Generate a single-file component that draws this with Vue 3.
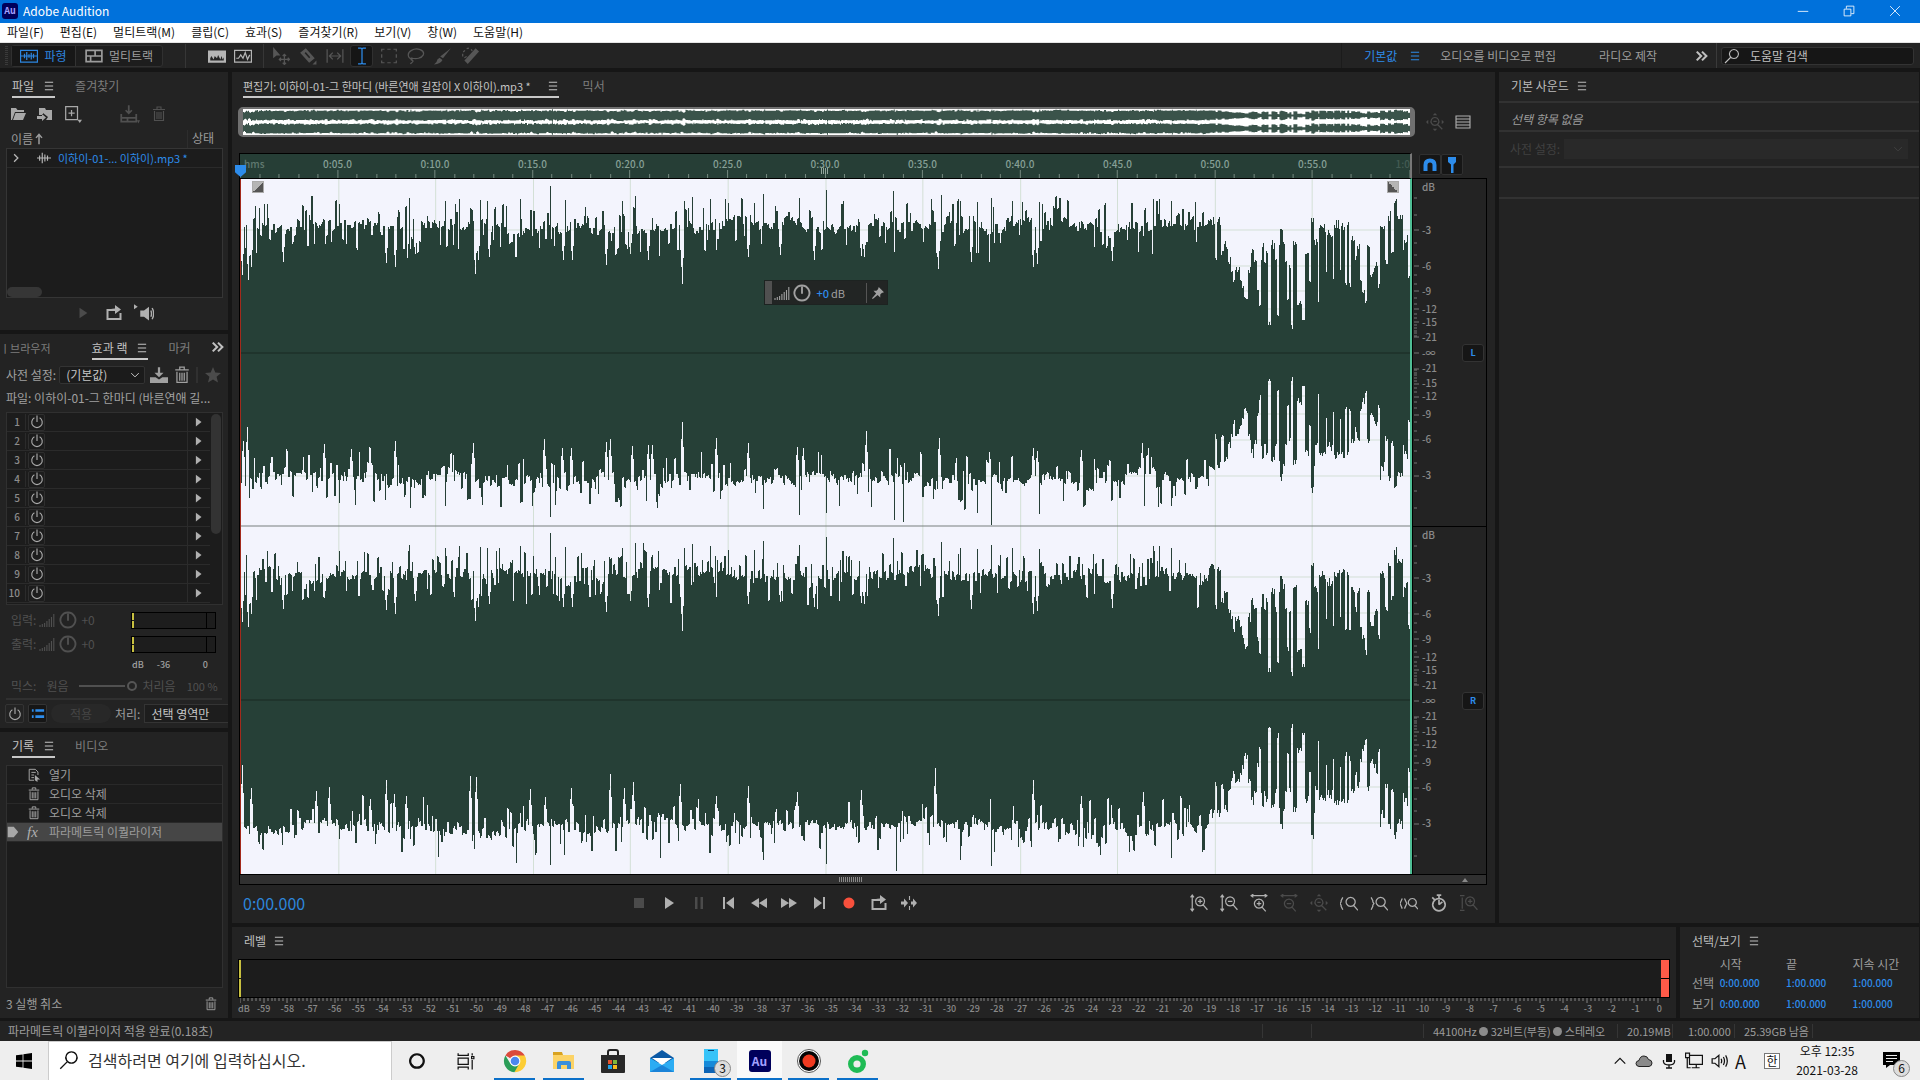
<template>
  <div class="app">
    <header class="titlebar">
      <span class="au-logo">Au</span>
      <h1 class="app-title">Adobe Audition</h1>
      <div class="window-controls">
        <button aria-label="Minimize"><Icon name="minimize" :size="12" /></button>
        <button aria-label="Restore"><Icon name="restore" :size="12" /></button>
        <button aria-label="Close"><Icon name="close" :size="12" /></button>
      </div>
    </header>

    <nav class="menubar">
      <button v-for="item in menus" :key="item">{{ item }}</button>
    </nav>

    <!-- Tools and workspaces -->
    <div class="toolbar">
      <span class="grip"></span>
      <div class="view-switch">
        <button class="view active"><Icon name="waveBox" :size="18" />파형</button>
        <button class="view"><Icon name="tracks" :size="18" />멀티트랙</button>
      </div>
      <span class="tool-divider first"></span>
      <div class="display-tools">
        <button aria-label="Spectral frequency"><Icon name="spectral" :size="18" /></button>
        <button aria-label="Spectral pitch"><Icon name="pitch" :size="18" /></button>
      </div>
      <span class="tool-divider"></span>
      <div class="tools">
        <button v-for="t in tools" :key="t" :class="{ active: t === 'ibeam' }" :aria-label="t">
          <Icon :name="t" :size="18" />
        </button>
      </div>
      <div class="workspaces">
        <button class="current">기본값 <Icon name="menu" :size="12" /></button>
        <button class="ws-video">오디오를 비디오로 편집</button>
        <button class="ws-radio">라디오 제작</button>
        <button class="ws-more" aria-label="More"><Icon name="more" :size="14" /></button>
      </div>
      <label class="help-search">
        <Icon name="search" :size="16" />
        <input type="text" value="도움말 검색" aria-label="도움말 검색" />
      </label>
    </div>

    <main class="workspace">
      <aside class="left-column">
        <section class="panel files-panel">
          <div class="tabs">
            <button class="tab active">파일 <Icon name="menu" :size="12" /></button>
            <button class="tab">즐겨찾기</button>
          </div>
          <div class="file-tools">
            <button aria-label="Open"><Icon name="folder" :size="16" /></button>
            <button aria-label="Import"><Icon name="importFile" :size="16" /></button>
            <button aria-label="New"><Icon name="newFile" :size="18" /></button>
            <button class="dim insert" aria-label="Insert"><Icon name="insert" :size="20" /></button>
            <button class="dim" aria-label="Delete"><Icon name="trash" :size="16" /></button>
          </div>
          <div class="file-head">
            <span class="name">이름<Icon name="arrowUp" :size="12" /></span>
            <span class="state">상태</span>
          </div>
          <div class="file-list">
            <div class="file-row">
              <Icon name="chevronRight" :size="10" />
              <Icon name="wave" :size="14" />
              <span>이하이-01-... 이하이).mp3 *</span>
            </div>
            <div class="h-thumb"></div>
          </div>
          <div class="preview-tools">
            <button class="dim" aria-label="Play"><Icon name="play" :size="14" /></button>
            <button aria-label="Loop"><Icon name="loop" :size="16" /></button>
            <button class="auto" aria-label="Auto play"><Icon name="speaker" :size="20" /></button>
          </div>
        </section>

        <section class="panel effects-panel">
          <div class="tabs effects-tabs">
            <button class="tab cut">ㅣ브라우저</button>
            <button class="tab active">효과 랙 <Icon name="menu" :size="12" /></button>
            <button class="tab marker">마커</button>
            <button class="tab-more" aria-label="More"><Icon name="more" :size="14" /></button>
          </div>
          <div class="preset-row">
            <label for="rack-preset">사전 설정:</label>
            <span class="select-box">
              <select id="rack-preset"><option>(기본값)</option></select>
              <Icon name="chevronDown" :size="10" />
            </span>
            <button aria-label="Save preset"><Icon name="save" :size="18" /></button>
            <button aria-label="Delete preset"><Icon name="trash" :size="18" /></button>
            <button class="dim star" aria-label="Favorite"><Icon name="star" :size="16" /></button>
          </div>
          <p class="rack-file">파일: 이하이-01-그 한마디 (바른연애 길...</p>
          <div class="rack">
            <ol class="slots">
              <li v-for="n in 10" :key="n">
                <span class="slot-no">{{ n }}</span>
                <button class="power" aria-label="Power"><Icon name="power" :size="14" /></button>
                <button class="slot-menu" aria-label="Slot"><Icon name="triangle" :size="10" /></button>
              </li>
            </ol>
            <div class="v-thumb"></div>
          </div>
          <div class="gain" v-for="g in ['입력:', '출력:']" :key="g">
            <span>{{ g }}</span>
            <Icon name="bars" :size="16" />
            <Icon name="knob" :size="20" />
            <span>+0</span>
            <span class="mini-meter"><i></i></span>
          </div>
          <div class="mini-scale"><span>dB</span><span class="mid">-36</span><span class="max">0</span></div>
          <div class="mix-row">
            <label for="mix">믹스:</label>
            <span class="dry">원음</span>
            <input id="mix" type="range" min="0" max="100" value="100" disabled />
            <span>처리음</span>
            <span class="mix-value">100 %</span>
          </div>
          <div class="apply-row">
            <button class="boxed" aria-label="Power"><Icon name="power" :size="14" /></button>
            <button class="boxed blue" aria-label="List"><Icon name="list" :size="14" /></button>
            <button class="apply" disabled>적용</button>
            <label for="process">처리:</label>
            <select id="process"><option>선택 영역만</option></select>
          </div>
        </section>

        <section class="panel history-panel">
          <div class="tabs">
            <button class="tab active">기록 <Icon name="menu" :size="12" /></button>
            <button class="tab">비디오</button>
          </div>
          <ul class="history">
            <li v-for="(h, i) in history" :key="i" :class="{ selected: i === 3 }">
              <span class="pointer"><Icon v-if="i === 3" name="pointer" :size="12" /></span>
              <em v-if="h.icon === 'fx'">fx</em>
              <Icon v-else :name="h.icon" :size="14" />
              <span>{{ h.text }}</span>
            </li>
          </ul>
          <div class="history-foot">
            <span>3 실행 취소</span>
            <button aria-label="Delete"><Icon name="trash" :size="14" /></button>
          </div>
        </section>
      </aside>

      <div class="center-column">
        <div class="upper">
          <section class="panel editor">
            <div class="tabs editor-tabs">
              <button class="tab active">편집기: 이하이-01-그 한마디 (바른연애 길잡이 X 이하이).mp3 * <Icon name="menu" :size="12" /></button>
              <button class="tab">믹서</button>
            </div>

            <div class="overview-row">
              <div class="overview">
                <svg :viewBox="`0 0 ${W} ${H}`" preserveAspectRatio="none">
                  <path v-for="(d, i) in waves" :key="i" :d="d" />
                </svg>
              </div>
              <button class="dim" aria-label="Zoom out full"><Icon name="zoomAll" :size="18" /></button>
              <button aria-label="Panel"><Icon name="lines" :size="16" /></button>
            </div>

            <div class="timeline">
              <div class="ruler">
                <div class="ruler-labels">
                  <span class="hms">hms</span>
                  <span v-for="t in times" :key="t">{{ t }}</span>
                  <span class="last">1:0</span>
                </div>
                <svg class="ruler-ticks" viewBox="0 0 1171 8" preserveAspectRatio="none">
                  <path :d="rulerTicks" />
                </svg>
                <span class="playhead"></span>
                <span class="mid-grip"></span>
              </div>
              <div class="snap-buttons">
                <button aria-label="Snap"><Icon name="magnet" :size="16" /></button>
                <button aria-label="Marker"><Icon name="marker" :size="16" /></button>
              </div>

              <div class="waves">
                <svg :viewBox="`0 0 ${W} ${H}`" preserveAspectRatio="none">
                  <path class="grid" :d="gridLines" />
                  <path v-for="(d, i) in waves" :key="i" class="wave" :d="d" />
                  <path class="zero" :d="`M0 174H${W}M0 521H${W}`" />
                  <path class="split" :d="`M0 347H${W}`" />
                </svg>
                <span class="fade-handle in"></span>
                <span class="fade-handle out"></span>
                <div class="hud">
                  <span class="hud-grip"></span>
                  <Icon name="bars" :size="16" />
                  <Icon name="knob" :size="20" />
                  <b>+0</b><span>dB</span>
                  <button aria-label="Pin"><Icon name="pin" :size="12" /></button>
                </div>
              </div>

              <div class="db-scale">
                <div v-for="c in ['L', 'R']" :key="c" class="db-channel">
                  <svg viewBox="0 0 6 347" preserveAspectRatio="none"><path :d="dbTicks" /></svg>
                  <span class="db-unit">dB</span>
                  <span v-for="(m, i) in dbMarks" :key="i" class="db-label" :style="{ top: m.pos + '%' }">{{ m.text }}</span>
                  <button class="channel-button">{{ c }}</button>
                </div>
              </div>
              <div class="h-scroll"><i></i><b></b></div>
            </div>

            <div class="transport">
              <output class="clock">0:00.000</output>
              <div class="transport-buttons">
                <button v-for="t in transport" :key="t" :class="{ dim: t === 'stop' || t === 'pause', rec: t === 'record' }" :aria-label="t">
                  <Icon :name="t" :size="16" />
                </button>
              </div>
              <div class="zoom-buttons">
                <button v-for="(z, i) in zooms" :key="i" :class="{ dim: z.off }" :aria-label="z.name">
                  <Icon :name="z.name" :size="18" />
                </button>
              </div>
            </div>
          </section>

          <section class="panel sound">
            <h2>기본 사운드 <Icon name="menu" :size="12" /></h2>
            <p class="nothing">선택 항목 없음</p>
            <div class="sound-preset">
              <label for="sound-preset">사전 설정:</label>
              <span class="sound-select">
                <select id="sound-preset" disabled><option></option></select>
                <Icon name="chevronDown" :size="10" />
              </span>
            </div>
            <div class="sound-empty"></div>
          </section>
        </div>

        <div class="lower">
          <section class="panel levels">
            <h2>레벨 <Icon name="menu" :size="12" /></h2>
            <div class="meter">
              <span class="floor"></span>
              <span class="clip"><i></i><i></i></span>
            </div>
            <svg class="level-ticks" viewBox="0 0 1419 5" preserveAspectRatio="none"><path :d="levelTicks" /></svg>
            <div class="level-labels">
              <span class="unit">dB</span>
              <span v-for="n in 59" :key="n">{{ n - 60 }}</span>
              <span class="zero-db">0</span>
            </div>
          </section>

          <section class="panel selection">
            <h2>선택/보기 <Icon name="menu" :size="12" /></h2>
            <table>
              <thead>
                <tr><td></td><th>시작</th><th>끝</th><th>지속 시간</th></tr>
              </thead>
              <tbody>
                <tr v-for="r in ['선택', '보기']" :key="r">
                  <th>{{ r }}</th><td>0:00.000</td><td>1:00.000</td><td>1:00.000</td>
                </tr>
              </tbody>
            </table>
          </section>
        </div>
      </div>
    </main>

    <footer class="statusbar">
      <span class="message">파라메트릭 이퀄라이저 적용 완료(0.18초)</span>
      <span class="cell c1"></span>
      <span class="cell c2"></span>
      <span class="cell format">44100Hz <i></i> 32비트(부동) <i></i> 스테레오</span>
      <span class="cell size">20.19MB</span>
      <span class="cell length">1:00.000</span>
      <span class="cell free">25.39GB 남음</span>
      <span class="cell end"></span>
    </footer>

    <div class="taskbar">
      <button class="start" aria-label="Start">
        <svg width="16" height="16" viewBox="0 0 16 16"><path d="M0 2.3 6.6 1.4V7.6H0zM7.4 1.2 16 0V7.6H7.4zM0 8.4H6.6V14.6L0 13.7zM7.4 8.4H16V16L7.4 14.8z" /></svg>
      </button>
      <label class="task-search">
        <Icon name="search" :size="20" />
        <input type="text" placeholder="검색하려면 여기에 입력하십시오." aria-label="검색" />
      </label>
      <button class="task" aria-label="Cortana"><Icon name="ring" :size="18" /></button>
      <button class="task" aria-label="Task view"><Icon name="taskview" :size="18" /></button>
      <button class="task open" aria-label="Chrome">
        <svg width="24" height="24" viewBox="0 0 24 24">
          <path fill="#db4a3c" d="M12 12 2.4 6.4A11.2 11.2 0 0 1 21.8 6.6z" />
          <path fill="#fccd35" d="M12 12V6.6h9.8A11.2 11.2 0 0 1 12 23.2z" />
          <path fill="#2a9d57" d="M2.4 6.4A11.2 11.2 0 0 0 11.4 23.2L16.4 14.6 7.4 14.6z" />
          <circle cx="12" cy="12" r="5.4" fill="#fff" /><circle cx="12" cy="12" r="4.3" fill="#4b87ee" />
        </svg>
      </button>
      <button class="task open" aria-label="Explorer">
        <svg width="24" height="24" viewBox="0 0 24 24">
          <path fill="#d9a320" d="M1 3h9l1 3H1z" /><path fill="#fcd366" d="M1 6h21v14H1z" />
          <path fill="#3a8fdc" d="M5 20v-6q0-2 2-2h10q2 0 2 2v6h-4v-4H9v4z" />
        </svg>
      </button>
      <button class="task" aria-label="Store">
        <svg width="24" height="24" viewBox="0 0 24 24">
          <path fill="none" stroke="#222" stroke-width="2" d="M7 6V3q0-2 2-2h6q2 0 2 2v3" /><path fill="#282828" d="M0 6h24v17q0 1-1 1H1q-1 0-1-1z" />
          <path fill="#e8542d" d="M7 11h4v4H7z" /><path fill="#80b83b" d="M12 11h4v4h-4z" /><path fill="#23a3e8" d="M7 16h4v4H7z" /><path fill="#fbbb1b" d="M12 16h4v4h-4z" />
        </svg>
      </button>
      <button class="task" aria-label="Mail">
        <svg width="24" height="24" viewBox="0 0 24 24">
          <path fill="#0b59a5" d="M0 9 12 1 24 9v5H0z" /><path fill="#fff" d="M2 9h20L12 16z" />
          <path fill="#2cacf3" d="M0 9 12 16 24 9v14H0z" /><path fill="#1a83d8" d="M0 23 12 16 24 23z" />
        </svg>
      </button>
      <button class="task open" aria-label="Phone">
        <svg width="24" height="24" viewBox="0 0 24 24">
          <path fill="#36c3f8" d="M5 0h14v12H5z" /><path fill="#168ad9" d="M5 12h14v6H5z" /><path fill="#0d64b5" d="M5 18h14v6H5z" /><path stroke="#08426f" d="M9 1.500h6" />
        </svg>
        <span class="badge">3</span>
      </button>
      <button class="task open current" aria-label="Audition"><span class="au-logo big">Au</span></button>
      <button class="task open" aria-label="Recorder">
        <svg width="24" height="24" viewBox="0 0 24 24">
          <circle cx="12" cy="12" r="11.500" fill="#fff" stroke="#555" /><circle cx="12" cy="12" r="10" fill="#050505" /><circle cx="12" cy="12" r="6.500" fill="#f03a20" />
        </svg>
      </button>
      <button class="task open" aria-label="Melon">
        <svg width="24" height="24" viewBox="0 0 24 24">
          <circle cx="11" cy="15" r="6.300" fill="none" stroke="#1fbb55" stroke-width="5.400" /><circle cx="19" cy="4" r="3.200" fill="#1fbb55" />
        </svg>
      </button>

      <div class="tray">
        <Icon name="chevronUp" :size="14" />
        <svg width="18" height="14" viewBox="0 0 18 14"><path fill="#8a8a8a" stroke="#222" d="M4 12.500Q1 12 1 9.500 1 7 4 6.500 5 2 9 2q3.500 0 4.500 3.500Q17 6 17 9t-3 3.500z" /></svg>
        <Icon name="mic" :size="16" />
        <Icon name="network" :size="18" />
        <Icon name="volume" :size="18" />
        <span class="lang">A</span>
        <span class="ime">한</span>
      </div>
      <div class="date"><span>오후 12:35</span><span>2021-03-28</span></div>
      <button class="notice" aria-label="Notifications">
        <svg width="18" height="18" viewBox="0 0 18 18"><path d="M0 1h17v13H7l-4 3v-3H0z" /><path stroke="#eee" d="M3 4.500h11M3 7.500h11M3 10.500h7" /></svg>
        <span class="badge">6</span>
      </button>
    </div>
  </div>
</template>

<script setup>
import { h } from 'vue'

// All glyphs sit on a 16 x 16 grid: f = filled path, s = stroked path
const glyphs = {
  minimize: { s: 'M1 8.500H15' },
  restore: { s: 'M1.500 5.500H10.500V14.500H1.500ZM4.500 5V1.500H14.500V11.500H11' },
  close: { s: 'M1.500 1.500 14.500 14.500M14.500 1.500 1.500 14.500' },
  menu: { s: 'M2.500 3H13.500M2.500 8H13.500M2.500 13H13.500', w: 1.4 },
  more: { s: 'M2 3 7 8 2 13M8 3 13 8 8 13', w: 2.4 },
  search: { s: 'M10 1.500A4.500 4.500 0 1 1 9.900 1.500ZM6.500 9.500 1 15' },
  arrowUp: { s: 'M8 15V2M4 6.500 8 2 12 6.500', w: 2 },
  waveBox: { s: 'M.5 3H15.500V13.500H.5ZM1 8H15M4 6V10M6 4.500V11.500M8 6.500V9.500M10 5V11M12 6V10' },
  tracks: { s: 'M1 3H15V13H1ZM1 8H15M9 3V8M5 8V13', w: 1.5 },
  spectral: { f: 'M0 3H16V14H0Z M2 12H14V9L13 11 12 8 11 11 9 7 8 10 6 8 5 11 3 8 2 10Z' },
  pitch: { s: 'M.5 3H15.500V13.500H.5ZM2 10H4L6 7 8 10 10 5 12 11 14 7' },
  move: { f: 'M1 0V10L4 7.500 7.500 7.500Z', s: 'M11 6.500V15.500M6.500 11H15.500M9.500 8 11 6.500 12.500 8M9.500 14 11 15.500 12.500 14M8 9.500 6.500 11 8 12.500M14 9.500 15.500 11 14 12.500' },
  razor: { f: 'M1 5 6 1 14 10 9 14ZM5 5.500 6 4.500 10 9 9 10ZM15.500 12V15.500H12Z' },
  slip: { s: 'M1 2V14M15 2V14M3 8H13M6 5 3 8 6 11M10 5 13 8 10 11' },
  ibeam: { s: 'M4.500 1H7Q8 1 8 2.500V13.500Q8 15 9 15H11.500M11.500 1H9Q8 1 8 2.500M4.500 15H7Q8 15 8 13.500' },
  marquee: { s: 'M1.500 4V2H4M6.500 2H9.500M12 2H14.500V4M14.500 6.500V9.500M14.500 12V14H12M9.500 14H6.500M4 14H1.500V12M1.500 9.500V6.500' },
  lasso: { s: 'M5 11C0 10 0 5 4 3 9 0 16 3 14.500 7 13 10 8 11 5 10 3 9 3 12 5 12 6 13 4 14 3 15' },
  brush: { f: 'M15 1 8 10 5.500 8.500ZM5 9.500 7.500 11.500Q6 15 0 15.500 3 13 3 11Z' },
  heal: { f: 'M13 1 16 4 6 15 3 12Z', s: 'M1.500 8.500V6M2 4.500 3.500 3M5 1.500 7 1M9 2 10 3.500M3 9.500 5 8.500' },
  folder: { f: 'M1 14V2H6L7.500 4H14V6H5L2 14ZM5.500 7H16L13 14H3Z' },
  importFile: { f: 'M2 9V2H8L9 4H15V14H9L11 11 6 7V9ZM0 10H5V8L9 11.500 5 15V13H0Z' },
  newFile: { s: 'M1.500 1.500H12V13H1.500ZM6.700 4.500V10M4 7.300H9.500', f: 'M12 13H16L14 16Z' },
  insert: { s: 'M7 1V7M4.500 5 7 7.500 9.500 5M1 8V14H13V8M1 11H13M6 11V14', f: 'M13.500 13H16L14.700 15.500Z', w: 1.4 },
  trash: { s: 'M2 3.500H14M6 3V1H10V3M3.500 5V14.500H12.500V5M6 6V13M8 6V13M10 6V13' },
  chevronRight: { s: 'M5 2 11 8 5 14', w: 2 },
  chevronDown: { s: 'M2 5 8 11 14 5', w: 1.6 },
  chevronUp: { s: 'M2 11 8 5 14 11', w: 1.4 },
  wave: { s: 'M0 8H16M3 5V11M6 2V14M9 4V12M12 5V11', w: 1.3 },
  play: { f: 'M4 2 13 8 4 14Z' },
  loop: { s: 'M5 5H1.500V14H14.500V8', f: 'M5 4Q6 3.500 9 3.500V0L15 4.500 9 9V6H5Z', w: 2 },
  speaker: { f: 'M5 6H8L12 3V14L8 11H5ZM0 1 3 3 0 5Z', s: 'M13.500 6Q14.500 8.500 13.500 11M14.500 4Q17 8.500 14.500 13' },
  save: { f: 'M0 10H5L8 12 11 10H16V15H0ZM7 1H9V6H12L8 10 4 6H7Z' },
  star: { f: 'M8 0 10.300 5.500 16 6 11.600 9.800 13 15.500 8 12.500 3 15.500 4.400 9.800 0 6 5.700 5.500Z' },
  power: { s: 'M5 3.200A6 6 0 1 0 11 3.200M8 .500V8', w: 1.3 },
  triangle: { f: 'M3 1 12 8 3 15Z' },
  bars: { s: 'M1 15V13M3.300 15V12M5.600 15V11M7.900 15V9M10.200 15V7M12.500 15V5M14.800 15V2' },
  knob: { s: 'M8 2A6 6 0 1 1 7.900 2ZM8 3V8.500', w: 1.5 },
  list: { s: 'M1 4H3M5 4H15M1 11H3M5 11H15', w: 3 },
  open: { s: 'M8 14H2.500V1.500H9.500L12.500 4.500V8M5 5H10M5 8H8M5 11H8', f: 'M9 8 15 13 12 13 12 16 9 14Z' },
  pointer: { f: 'M1 1H9L15 8 9 15H1Z' },
  zoomAll: { s: 'M8 4A3.500 3.500 0 1 1 7.900 4ZM6.500 7.500H9.500M10.500 10.500 14.500 14.500', f: 'M8 0 10 2H6ZM0 8 2 6V10ZM16 8 14 6V10ZM8 16 6 14H10Z' },
  lines: { s: 'M1 2H15V14H1ZM1 5H15M1 8H15M1 11H15' },
  magnet: { s: 'M3.500 14V8Q3.500 3.500 8 3.500T12.500 8V14', w: 4 },
  marker: { f: 'M4 0H12V5L9.500 7.500V16H7V7.500L4 5Z' },
  pin: { f: 'M9 0 16 7 13 8 11 10V14L7.500 10.500 1 16 0 15 5.500 8.500 2 5H6L8 3Z' },
  stop: { f: 'M3 3H13V13H3Z' },
  pause: { f: 'M4 2H6.500V14H4ZM9.500 2H12V14H9.500Z' },
  toStart: { f: 'M2 2H4V14H2ZM13 2V14L5 8Z' },
  rewind: { f: 'M8 3V13L0 8ZM16 3V13L8 8Z' },
  forward: { f: 'M0 3 8 8 0 13ZM8 3 16 8 8 13Z' },
  toEnd: { f: 'M3 2 11 8 3 14ZM12 2H14V14H12Z' },
  record: { f: 'M8 2.500A5.500 5.500 0 1 1 7.900 2.500Z' },
  skip: { f: 'M0 6.500H3V3.500L7 8 3 12.500V9.500H0ZM10 6.500H12V3.500L16 8 12 12.500V9.500H10Z', s: 'M8.500 1V5M8.500 11V15' },
  zoomInV: { s: 'M2 1V15M.5 3 2 1 3.500 3M.5 13 2 15 3.500 13M9 2.500A4 4 0 1 1 8.900 2.500ZM7 6.500H11M9 4.500V8.500M11.500 9.500 15.500 14' },
  zoomOutV: { s: 'M2 1V15M.5 3 2 1 3.500 3M.5 13 2 15 3.500 13M9 2.500A4 4 0 1 1 8.900 2.500ZM7 6.500H11M11.500 9.500 15.500 14' },
  zoomInH: { s: 'M1 1.500H15M3 0 1 1.500 3 3M13 0 15 1.500 13 3M8 4.500A4 4 0 1 1 7.900 4.500ZM6 8.500H10M8 6.500V10.500M10.500 11.500 14 15.500' },
  zoomOutH: { s: 'M1 1.500H15M3 0 1 1.500 3 3M13 0 15 1.500 13 3M8 4.500A4 4 0 1 1 7.900 4.500ZM6 8.500H10M10.500 11.500 14 15.500' },
  zoomReset: { s: 'M0 1.500H4M0 14.500H4M2 3V13M9 2.500A4 4 0 1 1 8.900 2.500ZM7 6.500H11M9 4.500V8.500M11.500 9.500 15.500 14' },
  zoomIn: { s: 'M2.500 3 1 6V7L0 8.500 1 10V11L2.500 14M9.500 3A4 4 0 1 1 9.400 3ZM12 10 16 14.500' },
  zoomOutPt: { s: 'M1 3 2.500 6V7L3.500 8.500 2.500 10V11L1 14M9.500 3A4 4 0 1 1 9.400 3ZM12 10 16 14.500' },
  zoomSel: { s: 'M2 4 0 8.500 2 13M4 4 6 8.500 4 13M11 4A3.500 3.500 0 1 1 10.900 4ZM13 10 16 13.500' },
  timer: { s: 'M8 4A5.500 5.500 0 1 1 7.900 4ZM8 9.500V5M6 1H10M8 1V4M8 9.500 11 7M2 3 4 5', w: 1.5 },
  ring: { s: 'M8 2A6 6 0 1 1 7.900 2Z', w: 2 },
  taskview: { s: 'M1 1V3H10V1M1 5.500H10V11H1ZM1 15.500V13.500H10V15.500M13.500 1V3M13.500 7V15.500M13 4H15V6H13Z' },
  mic: { f: 'M5 1H11V9H5Z', s: 'M2.500 7V9Q3 12 8 12T13.500 9V7M8 12V15.500M5 15H11', w: 1.3 },
  network: { s: 'M4 3H15.500V11H4ZM10 11V14M6 14H13M.5 1H4V5H.5ZM2 5V14H5' },
  volume: { s: 'M1 6H3.500L7 3V13L3.500 10H1ZM9 6Q10 8 9 10M11 4.500Q13 8 11 11.500M13 3Q16 8 13 13' }
}

const Icon = (props) => {
  const g = glyphs[props.name]
  const parts = []
  if (g.f) parts.push(h('path', { d: g.f, fill: 'currentColor', 'fill-rule': 'evenodd' }))
  if (g.s) parts.push(h('path', { d: g.s, fill: 'none', stroke: 'currentColor', 'stroke-width': g.w || 1.1 }))
  return h('svg', { class: 'icon', width: props.size, height: props.size, viewBox: '0 0 16 16' }, parts)
}
Icon.props = ['name', 'size']

const menus = ['파일(F)', '편집(E)', '멀티트랙(M)', '클립(C)', '효과(S)', '즐겨찾기(R)', '보기(V)', '창(W)', '도움말(H)']
const tools = ['move', 'razor', 'slip', 'ibeam', 'marquee', 'lasso', 'brush', 'heal']
const transport = ['stop', 'play', 'pause', 'toStart', 'rewind', 'forward', 'toEnd', 'record', 'loop', 'skip']
const zooms = [
  { name: 'zoomInV' }, { name: 'zoomOutV' }, { name: 'zoomInH' }, { name: 'zoomOutH', off: true }, { name: 'zoomAll', off: true },
  { name: 'zoomIn' }, { name: 'zoomOutPt' }, { name: 'zoomSel' }, { name: 'timer' }, { name: 'zoomReset', off: true }
]
const history = [
  { icon: 'open', text: '열기' },
  { icon: 'trash', text: '오디오 삭제' },
  { icon: 'trash', text: '오디오 삭제' },
  { icon: 'fx', text: '파라메트릭 이퀄라이저' }
]
const times = ['0:05.0', '0:10.0', '0:15.0', '0:20.0', '0:25.0', '0:30.0', '0:35.0', '0:40.0', '0:45.0', '0:50.0', '0:55.0']

// ---- Waveform ----
const W = 1171
const H = 695
const HALF = H / 4

// x, level pairs of the loud and quiet moments
const topSpikes = [
  1, 78, 4, 105, 7, 73, 10, 86, 15, 100, 26, 149, 42, 91, 51, 109, 73, 109, 84, 109, 98, 149, 105, 109, 145, 90, 154, 86, 168, 155, 174, 99,
  204, 152, 212, 108, 218, 154, 234, 79, 237, 93, 239, 153, 246, 152, 248, 96, 279, 154, 299, 105, 310, 167, 323, 93, 325, 153, 332, 93,
  366, 88, 382, 152, 390, 99, 395, 157, 408, 93, 440, 103, 442, 69, 444, 152, 452, 156, 470, 154, 476, 103, 488, 150, 508, 96, 514, 150,
  523, 159, 540, 98, 559, 155, 574, 93, 586, 163, 621, 97, 624, 96, 653, 162, 696, 100, 698, 84, 701, 158, 720, 152, 731, 91, 737, 151,
  751, 155, 772, 152, 793, 86, 797, 89, 799, 151, 854, 106, 872, 92, 878, 152, 914, 154, 920, 154, 932, 152
]
const bottomSpikes = [
  2, 88, 6, 74, 8, 145, 13, 105, 62, 104, 83, 91, 98, 150, 110, 96, 114, 152, 154, 88, 169, 155, 204, 153, 212, 102, 232, 90, 241, 152,
  279, 150, 304, 86, 310, 164, 322, 95, 331, 95, 366, 89, 370, 86, 392, 93, 408, 92, 412, 92, 417, 155, 442, 69, 476, 85, 508, 90, 523, 156,
  557, 94, 559, 162, 563, 95, 581, 102, 586, 160, 626, 78, 631, 154, 654, 167, 663, 169, 699, 85, 737, 160, 751, 172, 793, 95, 797, 98,
  799, 161, 841, 97, 843, 154, 903, 90, 905, 153, 919, 154, 932, 153
]
const rightSpikes = [
  1, 65, 10, 88, 18, 144, 75, 91, 88, 87, 98, 139, 129, 99, 132, 131, 145, 80, 153, 94, 165, 96, 169, 139, 203, 136, 229, 76, 235, 77,
  275, 163, 289, 89, 305, 97, 310, 165, 324, 155, 331, 88, 346, 142, 370, 74, 381, 142, 384, 88, 393, 82, 420, 158, 440, 84, 476, 96,
  508, 86, 523, 160, 557, 92, 586, 164, 621, 90, 656, 171, 695, 68, 720, 160, 751, 166, 793, 80, 841, 96, 860, 155, 904, 92, 932, 158
]
const tail = [
  970, 132, 976, 95, 978, 131, 982, 98, 985, 109, 989, 91, 992, 81, 994, 71, 996, 83, 998, 81, 1001, 73, 1003, 65, 1005, 56, 1009, 83,
  1012, 100, 1015, 91, 1018, 63, 1020, 47, 1022, 93, 1023, 106, 1025, 91, 1027, 102, 1029, 28, 1031, 28, 1032, 108, 1036, 93, 1038, 38,
  1040, 108, 1041, 124, 1044, 111, 1046, 91, 1048, 53, 1050, 88, 1052, 28, 1053, 24, 1054, 112, 1058, 48, 1060, 50, 1063, 33, 1065, 33,
  1066, 99, 1070, 72, 1072, 135, 1075, 113, 1079, 51, 1080, 125, 1084, 125, 1087, 81, 1088, 118, 1094, 74, 1095, 128, 1101, 83, 1102, 127,
  1106, 70, 1108, 128, 1110, 70, 1112, 113, 1116, 93, 1118, 107, 1121, 73, 1123, 61, 1126, 50, 1128, 108, 1131, 78, 1135, 85, 1137, 91,
  1139, 65, 1141, 127, 1142, 126, 1146, 93, 1149, 137, 1152, 100, 1155, 150, 1158, 137, 1161, 138, 1164, 103, 1165, 113, 1168, 118,
  1169, 75, 1171, 113
]

function random(seed) {
  return () => {
    seed = (seed * 1664525 + 1013904223) % 4294967296
    return seed / 4294967296
  }
}

function levels(seed, spikes, lower) {
  const rnd = random(seed)
  const out = []
  let drift = 0
  while (out.length <= W) {
    const kind = rnd()
    drift = drift * 0.9 + (rnd() - 0.5) * 6
    let v = 126 + drift + (rnd() - 0.5) * 10
    if (kind < 0.18) v += 5 + rnd() * 18
    if (kind > 0.86) v -= 6 + rnd() * 20
    out.push(v)
    if (rnd() > 0.4) out.push(v + (rnd() - 0.5) * 3)
  }
  for (let i = 0; i < spikes.length; i += 2) {
    const x = spikes[i]
    out[x] = spikes[i + 1]
    if (spikes[i + 1] < 100) {
      out[x + 1] = (out[x] + 120) / 2
      if (x > 0) out[x - 1] = (out[x] * 2 + 120) / 3
    }
  }
  for (let i = 0; i < tail.length - 2; i += 2) {
    for (let x = tail[i]; x < tail[i + 2]; x++) {
      // the lower half fades earlier and comes back quieter
      let scale = 1
      if (lower && x < 985) scale = 0.86
      if (lower && x > 1075 && x < 1141) scale = 0.8
      if (lower && x > 1141) scale = 0.9
      out[x] = tail[i + 1] * scale + (x > tail[i] ? (rnd() - 0.5) * 10 : 0)
    }
  }
  return out
}

function wavePath(mid, up, down) {
  let d = `M0 ${mid}`
  for (let x = 0; x < W; x++) d += `V${Math.round(mid - up[x])}H${x + 1}`
  for (let x = W - 1; x >= 0; x--) d += `V${Math.round(mid + down[x])}H${x}`
  return d + 'Z'
}

const waves = [
  wavePath(HALF, levels(11, topSpikes, false), levels(29, bottomSpikes, true)),
  wavePath(HALF * 3, levels(47, topSpikes, false), levels(83, rightSpikes, true))
]

// ---- Scales ----
const ratio = (db) => Math.pow(10, db / 20)

let rulerTicks = ''
for (let s = 0; s <= 60; s++) rulerTicks += `M${Math.round((s * W) / 60)} ${s % 5 ? 4 : 0}V8`

let gridLines = ''
for (let s = 1; s < 12; s++) gridLines += `M${Math.round((s * W) / 12)} 0V${H}`
for (const mid of [HALF, HALF * 3]) {
  for (const db of [-3, -6, -9, -12, -15]) {
    gridLines += `M0 ${Math.round(mid - HALF * ratio(db))}H${W}M0 ${Math.round(mid + HALF * ratio(db))}H${W}`
  }
}

const dbMarks = [{ text: '-∞', pos: 50 }]
for (const db of [-3, -6, -9, -12, -15, -21]) {
  dbMarks.push({ text: String(db), pos: 50 - 50 * ratio(db) })
  dbMarks.push({ text: String(db), pos: 50 + 50 * ratio(db) })
}
let dbTicks = 'M0 174H5'
for (let db = -1; db >= -21; db--) {
  const len = [-3, -6, -9, -12, -15, -21].includes(db) ? 5 : 3
  dbTicks += `M0 ${Math.round(174 - 174 * ratio(db))}H${len}M0 ${Math.round(174 + 174 * ratio(db))}H${len}`
}

let levelTicks = ''
for (let i = 0; i <= 360; i++) levelTicks += `M${Math.round((i * 1418) / 360)} 0V${i % 6 ? 3 : 5}`
</script>

<style>
body {
  background: #161616;
}
</style>

<style scoped>
.app {
  display: flex;
  flex-direction: column;
  min-height: 100vh;
  background: #161616;
  color: #9c9c9c;
  font-family: 'Noto Sans CJK KR', 'Noto Sans', sans-serif;
  font-size: 12px;
  line-height: 16px;
}

.app * {
  box-sizing: border-box;
}

button,
input,
select {
  margin: 0;
  padding: 0;
  border: 0;
  background: none;
  color: inherit;
  font: inherit;
  appearance: none;
}

button {
  display: flex;
  align-items: center;
  justify-content: center;
  white-space: nowrap;
}

svg {
  flex: none;
  display: block;
}

h1,
h2,
p,
ul,
ol {
  margin: 0;
  padding: 0;
  font-size: 12px;
  font-weight: 400;
  list-style: none;
}

.dim {
  color: #4b4b4b;
}

/* Title and menu */
.titlebar {
  display: flex;
  align-items: center;
  height: 23px;
  padding: 0 2px 2px;
  background: #0071db;
  color: #fff;
}

.au-logo {
  width: 16px;
  height: 16px;
  border-radius: 3px;
  background: #00005b;
  color: #a3a0ff;
  font-size: 9px;
  font-weight: 700;
  text-align: center;
}

.au-logo.big {
  width: 22px;
  height: 22px;
  font-size: 12px;
  line-height: 21px;
}

.app-title {
  flex: 1;
  margin-left: 5px;
}

.window-controls {
  display: flex;
}

.window-controls button {
  width: 46px;
  height: 20px;
}

.menubar {
  display: flex;
  gap: 16px;
  height: 20px;
  padding: 0 7px 2px;
  border-bottom: 1px solid #e4e4e4;
  background: #fff;
  color: #111;
}

/* Toolbar */
.toolbar {
  display: flex;
  align-items: center;
  height: 25px;
  padding: 0 6px 0 5px;
  background: #232323;
}

.grip {
  width: 3px;
  height: 19px;
  background: repeating-linear-gradient(#3a3a3a 0 1px, transparent 1px 2px);
}

.view-switch {
  display: flex;
  height: 22px;
  margin-left: 3px;
  border: 1px solid #303030;
  border-radius: 3px;
  background: #1d1d1d;
}

.view {
  gap: 6px;
  width: 86px;
}

.view.active {
  width: 64px;
  border-right: 1px solid #333;
  background: #171717;
  color: #2d86e0;
}

.tool-divider {
  width: 1px;
  height: 24px;
  background: #363636;
}

.tool-divider.first {
  margin-left: 22px;
}

.display-tools {
  display: flex;
  gap: 8px;
  margin: 0 11px 0 22px;
  color: #b5b5b5;
}

.tools {
  display: flex;
  gap: 4px;
  margin-left: 5px;
  color: #565656;
}

.tools button {
  width: 23px;
  height: 22px;
}

.tools button.active {
  border: 1px solid #303030;
  border-radius: 3px;
  background: #151515;
  color: #2d8ceb;
}

.workspaces {
  display: flex;
  align-items: center;
  height: 25px;
  margin-left: auto;
  padding: 0 7px 0 22px;
  border-left: 1px solid #1b1b1b;
  border-right: 1px solid #3a3a3a;
}

.workspaces .current {
  gap: 12px;
  color: #2d8ceb;
}

.ws-video {
  margin-left: 19px;
}

.ws-radio {
  margin: 0 38px 0 43px;
}

.ws-more {
  color: #c0c0c0;
}

.help-search {
  display: flex;
  align-items: center;
  width: 193px;
  height: 18px;
  margin-left: 4px;
  padding-left: 2px;
  border: 1px solid #333;
  border-radius: 3px;
  background: #161616;
  color: #c0c0c0;
}

.help-search input {
  width: 150px;
  margin-left: 10px;
  line-height: 16px;
}

/* Panels */
.workspace {
  display: flex;
  flex: 1;
  gap: 4px;
  padding: 4px 1px 3px 0;
}

.panel {
  background: #232323;
  overflow: hidden;
}

.left-column {
  display: flex;
  flex-direction: column;
  flex: none;
  gap: 4px;
  width: 228px;
}

.center-column {
  display: flex;
  flex: 1;
  flex-direction: column;
  gap: 4px;
  min-width: 0;
}

.upper {
  display: flex;
  flex: 1;
  gap: 4px;
}

.lower {
  display: flex;
  gap: 4px;
  height: 91px;
}

.tabs {
  display: flex;
  gap: 20px;
  height: 26px;
  padding-left: 12px;
}

.tab {
  gap: 9px;
  height: 26px;
  padding-top: 4px;
  border-bottom: 2px solid transparent;
  color: #7d7d7d;
}

.tab.active {
  border-bottom-color: #c8c8c8;
  color: #c4c4c4;
}

.file-tools {
  display: flex;
  align-items: center;
  gap: 11px;
  height: 32px;
  padding-left: 10px;
  color: #a8a8a8;
}

.file-tools .insert {
  margin-left: 27px;
}

.file-tools .dim {
  color: #505050;
}

.file-head {
  display: flex;
  justify-content: space-between;
  height: 18px;
  padding: 0 14px 0 11px;
}

.name {
  display: flex;
  align-items: center;
}

.state {
  padding-left: 4px;
  border-left: 1px solid #2d2d2d;
}

.file-list {
  display: flex;
  flex-direction: column;
  justify-content: space-between;
  height: 150px;
  margin: 0 5px 0 6px;
  border: 1px solid #353535;
  background: #1c1c1c;
}

.file-row {
  display: flex;
  align-items: center;
  height: 19px;
  padding-left: 4px;
  border-bottom: 1px solid #2a2a2a;
  color: #b8b8b8;
}

.file-row span {
  margin-left: 7px;
  color: #2d8ceb;
  font-size: 11px;
}

.file-row svg + svg {
  margin-left: 16px;
}

.h-thumb {
  width: 35px;
  height: 10px;
  border-radius: 5px;
  background: #363636;
}

.preview-tools {
  display: flex;
  align-items: center;
  gap: 16px;
  height: 32px;
  padding: 0 0 2px 76px;
  color: #b0b0b0;
}

.preview-tools .auto {
  margin-left: -4px;
}

/* Effects rack */
.files-panel {
  height: 258px;
}

.effects-panel {
  height: 394px;
}

.effects-tabs {
  padding-left: 0;
}

.effects-tabs .cut {
  margin-right: 21px;
  font-size: 11px;
}

.tab-more {
  margin-left: auto;
  margin-right: 3px;
  color: #c0c0c0;
}

.preset-row {
  display: flex;
  align-items: center;
  gap: 5px;
  height: 30px;
  padding-left: 6px;
  color: #a0a0a0;
  white-space: nowrap;
}

.select-box {
  display: flex;
  align-items: center;
  width: 86px;
  height: 18px;
  margin-left: -2px;
  padding: 0 4px 0 6px;
  border: 1px solid #333;
  border-radius: 2px;
  background: #1b1b1b;
  color: #c6c6c6;
}

.select-box select {
  flex: 1;
  width: 50px;
  height: 16px;
}

.preset-row .star {
  padding-left: 7px;
  border-left: 2px solid #303030;
}

.rack-file {
  height: 22px;
  padding-left: 6px;
  color: #a0a0a0;
}

.rack {
  display: flex;
  justify-content: space-between;
  height: 193px;
  margin: 0 5px 3px 6px;
  border: 1px solid #303030;
  background: #1c1c1c;
}

.slots {
  width: 204px;
}

.slots li {
  display: flex;
  align-items: center;
  height: 19px;
  border-bottom: 1px solid #2b2b2b;
}

.slot-no {
  width: 19px;
  padding-right: 5px;
  border-right: 1px solid #2b2b2b;
  color: #8c8c8c;
  font-size: 10px;
  font-weight: 500;
  text-align: right;
}

.power {
  width: 17px;
  height: 17px;
  margin-left: 2px;
  border: 1px solid #2e2e2e;
  border-radius: 2px;
  color: #aaa;
}

.slot-menu {
  height: 18px;
  margin-left: auto;
  padding: 0 6px;
  border-left: 1px solid #2b2b2b;
  color: #b0b0b0;
}

.v-thumb {
  width: 10px;
  height: 120px;
  margin: 1px;
  border-radius: 5px;
  background: #333;
}

.gain {
  display: flex;
  align-items: center;
  gap: 3px;
  height: 24px;
  padding: 0 12px 0 11px;
  color: #505050;
}

.mini-meter {
  display: flex;
  width: 85px;
  height: 17px;
  margin-left: auto;
  border: 1px solid #000;
  background: linear-gradient(90deg, transparent 74px, #000 74px 75px, transparent 75px), #1d1d1d;
}

.mini-meter i {
  width: 2px;
  background: linear-gradient(#c8c040 7px, #1c1c1c 7px 8px, #c8c040 8px);
}

.mini-scale {
  display: flex;
  height: 16px;
  margin: 1px 20px 0 132px;
  color: #a0a0a0;
  font-size: 9px;
  font-weight: 500;
}

.mini-scale .mid {
  margin-left: 13px;
}

.mini-scale .max {
  margin-left: auto;
}

.mix-row {
  display: flex;
  align-items: center;
  gap: 6px;
  height: 27px;
  margin: 0 6px;
  padding-left: 5px;
  border-bottom: 2px solid #303030;
  color: #505050;
  white-space: nowrap;
}

.dry {
  margin-left: 4px;
}

.mix-row input {
  width: 58px;
  height: 12px;
  margin-left: 4px;
  background: linear-gradient(#505050, #505050) 0 5px / 46px 2px no-repeat;
}

.mix-row input::-webkit-slider-thumb {
  width: 10px;
  height: 10px;
  border: 2px solid #555;
  border-radius: 50%;
  background: #232323;
  appearance: none;
}

.mix-value {
  margin-left: 5px;
  font-size: 11px;
}

.apply-row {
  display: flex;
  align-items: center;
  gap: 4px;
  height: 27px;
  padding-left: 5px;
  white-space: nowrap;
}

.boxed {
  width: 19px;
  height: 19px;
  border: 1px solid #343434;
  border-radius: 2px;
  color: #aaa;
}

.boxed.blue {
  background: #161616;
  color: #2d8ceb;
}

.apply {
  width: 60px;
  height: 19px;
  border-radius: 10px;
  background: #282828;
  color: #454545;
}

.apply-row select {
  flex: 1;
  height: 19px;
  padding-left: 6px;
  border: 1px solid #343434;
  border-right: 0;
  background: #1d1d1d;
  color: #c6c6c6;
}

/* History */
.history-panel {
  display: flex;
  flex: 1;
  flex-direction: column;
}

.history {
  flex: 1;
  margin: 7px 5px 0 6px;
  border: 1px solid #303030;
  background: #1c1c1c;
}

.history li {
  display: flex;
  align-items: center;
  gap: 8px;
  height: 19px;
  border-bottom: 1px solid #292929;
}

.history li.selected {
  background: #464646;
}

.history .pointer {
  width: 12px;
  height: 12px;
  color: #b8b8b8;
}

.history .icon {
  color: #a8a8a8;
}

.history em {
  width: 14px;
  color: #b0b0b0;
  font-family: 'Liberation Serif', serif;
  font-size: 15px;
}

.history-foot {
  display: flex;
  align-items: center;
  justify-content: space-between;
  height: 30px;
  padding: 2px 10px 0 6px;
}

/* Editor */
.editor {
  display: flex;
  flex: 1;
  flex-direction: column;
  padding: 0 8px 0 6px;
}

.editor-tabs {
  gap: 24px;
  padding-left: 5px;
}

.editor-tabs .active {
  gap: 16px;
  font-size: 11px;
}

.overview-row {
  display: flex;
  align-items: center;
  gap: 11px;
  height: 30px;
  margin-top: 9px;
  padding-right: 16px;
  color: #b0b0b0;
}

.overview {
  flex: 1;
  height: 30px;
  border: solid #707070;
  border-width: 2px 5px;
  border-radius: 5px;
  background: #fff;
}

.overview svg {
  width: 100%;
  height: 26px;
  fill: #3a534a;
}

.timeline {
  display: grid;
  flex: 1;
  grid-template: 25px 1fr 11px / 1fr 75px;
  margin: 16px 0 0 1px;
  border-left: 1px solid #000;
}

.ruler {
  position: relative;
  display: flex;
  flex-direction: column;
  justify-content: space-between;
  border-top: 1px solid #000;
  border-right: 2px solid #777;
  background: #263e36;
}

.ruler-labels {
  display: grid;
  grid-template-columns: 0.5fr repeat(11, 1fr) 0.5fr;
  padding-top: 2px;
  color: #87a096;
  font-size: 10px;
  font-weight: 500;
  text-align: center;
}

.hms {
  padding-left: 4px;
  text-align: left;
  opacity: 0.6;
}

.last {
  text-align: right;
  opacity: 0.3;
}

.ruler-ticks {
  position: absolute;
  bottom: 0;
  left: 0;
  width: 100%;
  height: 8px;
  stroke: #75897f;
}

.playhead {
  position: absolute;
  bottom: 1px;
  left: -5px;
  width: 11px;
  height: 12px;
  background: #2d8ceb;
  clip-path: polygon(0 0, 100% 0, 100% 60%, 50% 100%, 0 60%);
}

.mid-grip {
  position: absolute;
  bottom: 4px;
  left: 50%;
  width: 7px;
  height: 6px;
  margin-left: -4px;
  background: repeating-linear-gradient(90deg, #92a59c 0 1px, transparent 1px 2px);
}

.snap-buttons {
  display: flex;
  padding: 1px 0 3px 7px;
  color: #2d8ceb;
}

.snap-buttons button {
  width: 22px;
  border: 1px solid #303030;
  border-radius: 2px;
  background: #161616;
}

.waves {
  position: relative;
  border-top: 1px solid #000;
  border-right: 2px solid #4fbd94;
  background: #f3f4fd;
}

.waves > svg {
  position: absolute;
  width: 100%;
  height: 100%;
  border-left: 1px solid #a32a1c;
  shape-rendering: crispEdges;
}

.grid {
  stroke: #d3e0d6;
}

.wave {
  fill: #264037;
}

.zero {
  stroke: #182822;
}

.split {
  stroke: #767f7d;
}

.fade-handle {
  position: absolute;
  top: 2px;
  left: 12px;
  width: 12px;
  height: 12px;
  border: 1px solid #aaa;
  background: linear-gradient(135deg, #b5b5b5 50%, #555 50%);
}

.fade-handle.out {
  right: 11px;
  left: auto;
  background: linear-gradient(45deg, #555 50%, #b5b5b5 50%);
}

.hud {
  position: absolute;
  top: 101px;
  left: 45%;
  display: flex;
  align-items: center;
  gap: 2px;
  width: 124px;
  height: 25px;
  margin-left: -3px;
  border: 1px solid #1d2321;
  background: #222524;
  color: #a0a0a0;
  font-size: 11px;
}

.hud-grip {
  width: 7px;
  height: 23px;
  background: #505050;
}

.hud b {
  margin-left: 3px;
  color: #2d8ceb;
  font-weight: 500;
}

.hud button {
  height: 20px;
  margin-left: auto;
  padding: 0 3px 0 5px;
  border-left: 1px solid #555;
}

.db-scale {
  display: flex;
  flex-direction: column;
  border: 1px solid #000;
  border-bottom: 0;
}

.db-channel {
  position: relative;
  flex: 1;
}

.db-channel + .db-channel {
  border-top: 1px solid #000;
}

.db-channel svg {
  width: 6px;
  height: 100%;
  margin-left: 1px;
  stroke: #777;
}

.db-unit,
.db-label {
  position: absolute;
  left: 9px;
  margin-top: -8px;
  color: #8a8a8a;
  font-size: 10px;
  font-weight: 500;
}

.db-unit {
  top: 8px;
}

.channel-button {
  position: absolute;
  top: 50%;
  right: 2px;
  width: 22px;
  height: 18px;
  margin-top: -9px;
  border: 1px solid #333;
  border-radius: 3px;
  background: #161616;
  color: #2d8ceb;
  font-size: 9px;
  font-weight: 700;
}

.h-scroll {
  display: flex;
  grid-column: 1 / 3;
  align-items: center;
  border: 1px solid #000;
  border-left: 0;
  background: #303030;
}

.h-scroll i {
  width: 24px;
  height: 5px;
  margin: 0 auto;
  background: repeating-linear-gradient(90deg, #888 0 1px, transparent 1px 2px);
}

.h-scroll b {
  margin-right: 18px;
  border: 3px solid transparent;
  border-top: 0;
  border-bottom: 4px solid #888;
}

.transport {
  display: grid;
  grid-template-columns: 1fr auto 1fr;
  align-items: center;
  height: 38px;
  padding: 0 0 3px 5px;
  color: #b0b0b0;
}

.clock {
  color: #2d86dc;
  font-size: 16px;
}

.transport-buttons {
  display: flex;
  gap: 14px;
  margin-left: -182px;
}

.transport-buttons .rec {
  color: #f8503c;
}

.zoom-buttons {
  display: flex;
  justify-content: flex-end;
  gap: 12px;
  padding-right: 9px;
}

/* Essential sound */
.sound {
  width: 420px;
}

.panel h2 {
  display: flex;
  align-items: center;
  gap: 7px;
  height: 29px;
  padding: 0 0 1px 12px;
  color: #bdbdbd;
}

.nothing {
  height: 31px;
  padding: 8px 12px 0;
  border: solid #323232;
  border-width: 2px 0;
  font-style: italic;
}

.sound-preset {
  display: flex;
  align-items: center;
  gap: 4px;
  height: 36px;
  padding: 0 11px 0 11px;
  border-bottom: 2px solid #323232;
  color: #404040;
}

.sound-select {
  display: flex;
  flex: 1;
  align-items: center;
  height: 20px;
  padding-right: 5px;
  background: #292929;
}

.sound-select select {
  flex: 1;
}

.sound-empty {
  height: 31px;
  border-bottom: 2px solid #323232;
}

/* Levels */
.levels {
  flex: 1;
}

.meter {
  display: flex;
  justify-content: space-between;
  height: 39px;
  margin: 3px 6px 0 6px;
  border: 1px solid #000;
  background: #1c1c1c;
}

.floor {
  width: 2px;
  background: linear-gradient(#c8c040 18px, #1c1c1c 18px 19px, #c8c040 19px);
}

.clip {
  display: flex;
  flex-direction: column;
  gap: 1px;
  width: 8px;
  background: #000;
}

.clip i {
  flex: 1;
  background: #ff5a48;
}

.level-ticks {
  width: calc(100% - 25px);
  height: 5px;
  margin-left: 8px;
  stroke: #858585;
}

.level-labels {
  display: grid;
  grid-template-columns: 0.5fr repeat(59, 1fr) 0.5fr;
  margin: -2px 17px 0 8px;
  color: #8a8a8a;
  font-size: 9px;
  font-weight: 500;
  text-align: center;
}

.level-labels span {
  min-width: 0;
}

.level-labels .unit {
  margin-left: -2px;
  text-align: left;
}

.level-labels .zero-db {
  margin-right: -3px;
  text-align: right;
}

.selection {
  width: 239px;
}

.selection table {
  margin-left: 12px;
  border-spacing: 0;
}

.selection th,
.selection td {
  height: 21px;
  padding: 0;
  font-weight: 400;
  text-align: left;
}

.selection thead th,
.selection thead td {
  width: 67px;
  height: 16px;
}

.selection thead td {
  width: 28px;
}

.selection tbody td {
  color: #2d8ceb;
  font-size: 10px;
  font-weight: 500;
}

/* Status bar */
.statusbar {
  display: flex;
  align-items: center;
  height: 20px;
  padding-left: 8px;
  background: #232323;
  white-space: nowrap;
}

.message {
  flex: 1;
}

.cell {
  height: 14px;
  padding-left: 9px;
  border-left: 1px solid #353535;
  font-size: 11px;
  line-height: 14px;
}

.cell i {
  display: inline-block;
  width: 9px;
  height: 9px;
  border-radius: 50%;
  background: #8c8c8c;
}

.c1 {
  width: 49px;
}

.c2 {
  width: 112px;
}

.format {
  width: 194px;
}

.size {
  width: 55px;
}

.length {
  width: 62px;
  padding-left: 15px;
}

.free {
  width: 78px;
}

.end {
  width: 108px;
}

/* Windows taskbar */
.taskbar {
  display: flex;
  align-items: center;
  height: 40px;
  background: #eee;
  color: #111;
}

.start {
  width: 48px;
  height: 40px;
}

.task-search {
  display: flex;
  align-items: center;
  width: 344px;
  height: 40px;
  padding: 0 0 2px 10px;
  border: 1px solid #ccc;
  background: #fff;
}

.task-search input {
  flex: 1;
  margin-left: 9px;
  font-size: 16px;
  line-height: 24px;
}

.task-search input::placeholder {
  color: #333;
}

.task {
  position: relative;
  width: 45px;
  height: 40px;
  margin: 0 2px;
}

.task.open::after {
  content: '';
  position: absolute;
  right: 2px;
  bottom: 0;
  left: 2px;
  height: 3px;
  background: #0b70c9;
}

.task.current {
  background: #fafafa;
}

.task.current::after {
  right: 0;
  left: 0;
}

.badge {
  position: absolute;
  right: 2px;
  bottom: 4px;
  width: 17px;
  height: 17px;
  border: 1px solid #888;
  border-radius: 50%;
  background: #ddd;
  color: #111;
  font-size: 12px;
  line-height: 14px;
  text-align: center;
}

.tray {
  display: flex;
  align-items: center;
  gap: 8px;
  margin-left: auto;
}

.lang {
  width: 14px;
  margin-left: -2px;
  font-size: 18px;
}

.ime {
  width: 16px;
  height: 16px;
  margin-left: 7px;
  border: 1px solid #777;
  background: #fff;
  line-height: 14px;
  text-align: center;
}

.date {
  display: flex;
  flex-direction: column;
  width: 66px;
  margin: 0 23px 0 14px;
  padding-bottom: 3px;
  line-height: 19px;
  text-align: center;
}

.notice {
  position: relative;
  width: 30px;
  height: 40px;
  margin-right: 7px;
  padding: 0 12px 2px 0;
}

.notice .badge {
  right: 3px;
}
</style>
